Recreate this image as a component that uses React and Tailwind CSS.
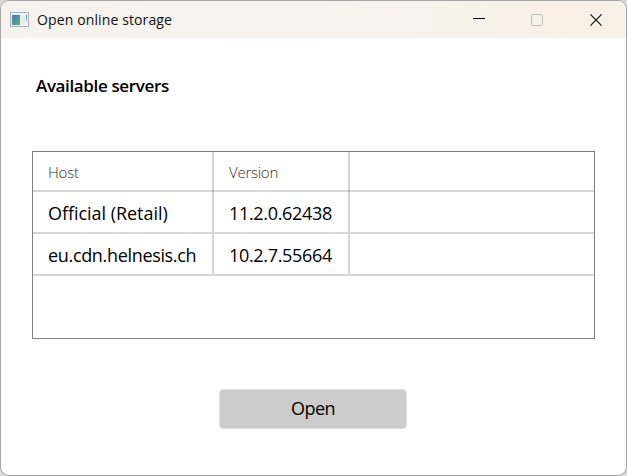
const servers = [
  { host: "Official (Retail)", version: "11.2.0.62438", hostSpacing: "tracking-[-0.04px]" },
  { host: "eu.cdn.helnesis.ch", version: "10.2.7.55664", hostSpacing: "tracking-[-0.33px]" },
];

function AppIcon() {
  return (
    <svg width="19" height="16" viewBox="0 0 19 16" shapeRendering="crispEdges">
      <defs>
        <linearGradient id="screen" x1="0" y1="0" x2="1" y2="1">
          <stop offset="0" stopColor="#4779a6" />
          <stop offset="0.55" stopColor="#4f9693" />
          <stop offset="1" stopColor="#66ab7c" />
        </linearGradient>
        <linearGradient id="strip" x1="0" y1="0" x2="0" y2="1">
          <stop offset="0" stopColor="#4f86b0" />
          <stop offset="1" stopColor="#8cc9a4" />
        </linearGradient>
      </defs>
      <rect x="0.5" y="0.5" width="18" height="14" fill="#eef2f5" stroke="#a9b1bb" />
      <rect x="2" y="3" width="8" height="10" fill="url(#screen)" />
      <rect x="11" y="3" width="4" height="10" fill="#e8ecf0" />
      <rect x="16" y="3" width="1" height="6" fill="url(#strip)" />
    </svg>
  );
}

function TitleBar() {
  return (
    <header className="flex h-[37px] shrink-0 items-center bg-linear-to-r from-[#f5f2ef] via-[#f7f2ed] to-[#f9f0e6] pl-[9px]">
      <AppIcon />
      <h1 className="ml-2 flex-1 text-[14px] leading-5 tracking-[0.12px] text-[#111]">Open online storage</h1>
      <div className="flex h-full">
        <button className="flex w-[58px] items-center justify-center" aria-label="Minimize">
          <svg width="12" height="12" viewBox="0 0 12 12" shapeRendering="crispEdges">
            <path d="M0 4.5H12" stroke="#000" />
          </svg>
        </button>
        <button className="flex w-[58px] items-center justify-center" aria-label="Maximize">
          <svg width="12" height="12" viewBox="0 0 12 12">
            <rect x="0.5" y="0.5" width="11" height="11" rx="0.8" fill="none" stroke="#c3c0bc" />
          </svg>
        </button>
        <button className="flex w-[60px] items-center justify-center" aria-label="Close">
          <svg width="12" height="12" viewBox="0 0 12 12">
            <path d="M0.4 0.4L11.6 11.6M11.6 0.4L0.4 11.6" stroke="#111" strokeWidth="1.2" />
          </svg>
        </button>
      </div>
    </header>
  );
}

const columns = "grid grid-cols-[181px_136px_1fr]";

export default function App() {
  return (
    <div className="h-[476px] w-[627px] bg-[#d9d9d9] font-['Open_Sans','Noto_Sans',sans-serif]">
      <div className="flex h-full flex-col overflow-hidden rounded-[9px] border border-[#a3a3a3] bg-white">
        <TitleBar />
        <main className="flex flex-1 flex-col pr-[31px] pl-[31px]">
          <h2 className="mt-9 ml-[4px] text-[17px] leading-6 font-semibold tracking-[-0.36px] text-black">Available servers</h2>
          <div className="mt-[53px] h-[188px] border border-[#808080]">
            <div className={`${columns} h-10 border-b-2 border-[#d6d6d6] text-[15px] font-light text-[#2e2e2e]`}>
              <div className="-mb-0.5 flex items-center border-r-2 border-black/16 pt-0.5 pb-0.5 pl-[15px] tracking-[-0.2px]">Host</div>
              <div className="-mb-0.5 flex items-center border-r-2 border-black/16 pt-0.5 pb-0.5 pl-[15px] tracking-[-0.25px]">Version</div>
              <div />
            </div>
            {servers.map((s) => (
              <div key={s.host} className={`${columns} h-[42px] border-b-2 border-[#d6d6d6] text-[18px] text-black`}>
                <div className={`flex items-center border-r-2 border-[#d6d6d6] pt-0.5 pl-[15px] ${s.hostSpacing}`}>{s.host}</div>
                <div className="flex items-center border-r-2 border-[#d6d6d6] pt-0.5 pl-[15px] tracking-[-0.33px]">{s.version}</div>
                <div />
              </div>
            ))}
          </div>
          <button className="mt-[50px] ml-[187px] h-10 w-[188px] rounded-[4px] border border-[#e0e0e0] bg-[#ccc] pb-0.5 text-[18px] tracking-[-0.6px] text-black">Open</button>
        </main>
      </div>
    </div>
  );
}
